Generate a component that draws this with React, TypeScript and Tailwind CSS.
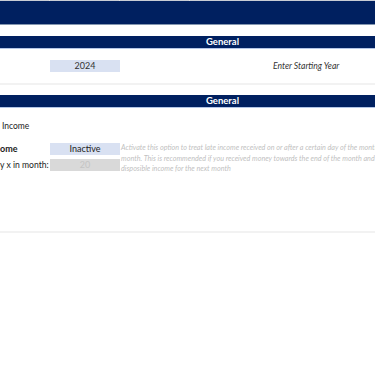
export default function App() {
  const font = { fontFamily: "Lato, 'Open Sans', sans-serif" };
  return (
    <div className="w-[375px] h-[375px] bg-white overflow-hidden text-[9px] text-[#222]" style={font}>
      {/* column grid stub */}
      <div className="flex h-px bg-[#c8ccd4]">
        <div className="w-[50px] shrink-0 border-r border-[#e0e0e0]" />
        <div className="w-[70px] shrink-0 border-r border-[#e0e0e0]" />
        <div className="w-[70px] shrink-0 border-r border-[#e0e0e0]" />
      </div>
      <div className="h-[23px] bg-[#002060]" />
      <div className="h-px bg-[#8497b0]" />
      <div className="h-[11px]" />

      {/* General header */}
      <div className="h-[12px] bg-[#002060] flex items-center pl-[70px]">
        <span className="flex-1 text-center text-white font-bold text-[9.5px] leading-none">General</span>
      </div>
      <div className="h-px bg-[#b4c6e7]" />
      <div className="h-[11px]" />

      {/* Starting year row */}
      <div className="flex items-center h-[12px]">
        <div className="w-[50px] shrink-0" />
        <div className="w-[70px] shrink-0 h-full bg-[#d9e1f2] flex items-center justify-center text-[#333]">2024</div>
        <div className="w-[153px] shrink-0" />
        <div className="italic text-[8.6px] text-[#333] whitespace-nowrap">Enter Starting Year</div>
      </div>
      <div className="h-[11px]" />
      <div className="h-[2px] bg-[#f2f2f2]" />
      <div className="h-[10px]" />

      {/* second header */}
      <div className="h-[12px] bg-[#002060] flex items-center pl-[70px]">
        <span className="flex-1 text-center text-white font-bold text-[9.5px] leading-none">General</span>
      </div>
      <div className="h-px bg-[#b4c6e7]" />

      <div className="h-[12px]" />
      <div className="h-[12px] flex items-center pl-[2px]">
        <span className="whitespace-nowrap text-[8.5px] text-[#222]">Income</span>
      </div>

      <div className="h-[11px]" />
      <div className="flex">
        <div className="w-[50px] shrink-0 flex flex-col">
          <div className="h-[12px] flex items-center">
            <span className="whitespace-nowrap font-bold">ome</span>
          </div>
          <div className="h-[4px]" />
          <div className="h-[12px] flex items-center">
            <span className="whitespace-nowrap text-[8.6px]">y x in month:</span>
          </div>
        </div>
        <div className="w-[70px] shrink-0 flex flex-col">
          <div className="h-[12px] bg-[#d9e1f2] flex items-center justify-center text-[#222]">Inactive</div>
          <div className="h-[4px]" />
          <div className="h-[12px] bg-[#d9d9d9] flex items-center justify-center text-[#c4c4c4]">20</div>
        </div>
        <div className="min-w-0 flex-1 overflow-hidden pl-[1px] italic text-[7.2px] leading-[10.5px] text-[#bfbfbf] whitespace-nowrap">
          <div>Activate this option to treat late income received on or after a certain day of the month as</div>
          <div>month. This is recommended if you received money towards the end of the month and want</div>
          <div>disposible income for the next month</div>
        </div>
      </div>

      <div className="h-[56px]" />
      <div className="h-[2px] bg-[#f2f2f2]" />
    </div>
  );
}
